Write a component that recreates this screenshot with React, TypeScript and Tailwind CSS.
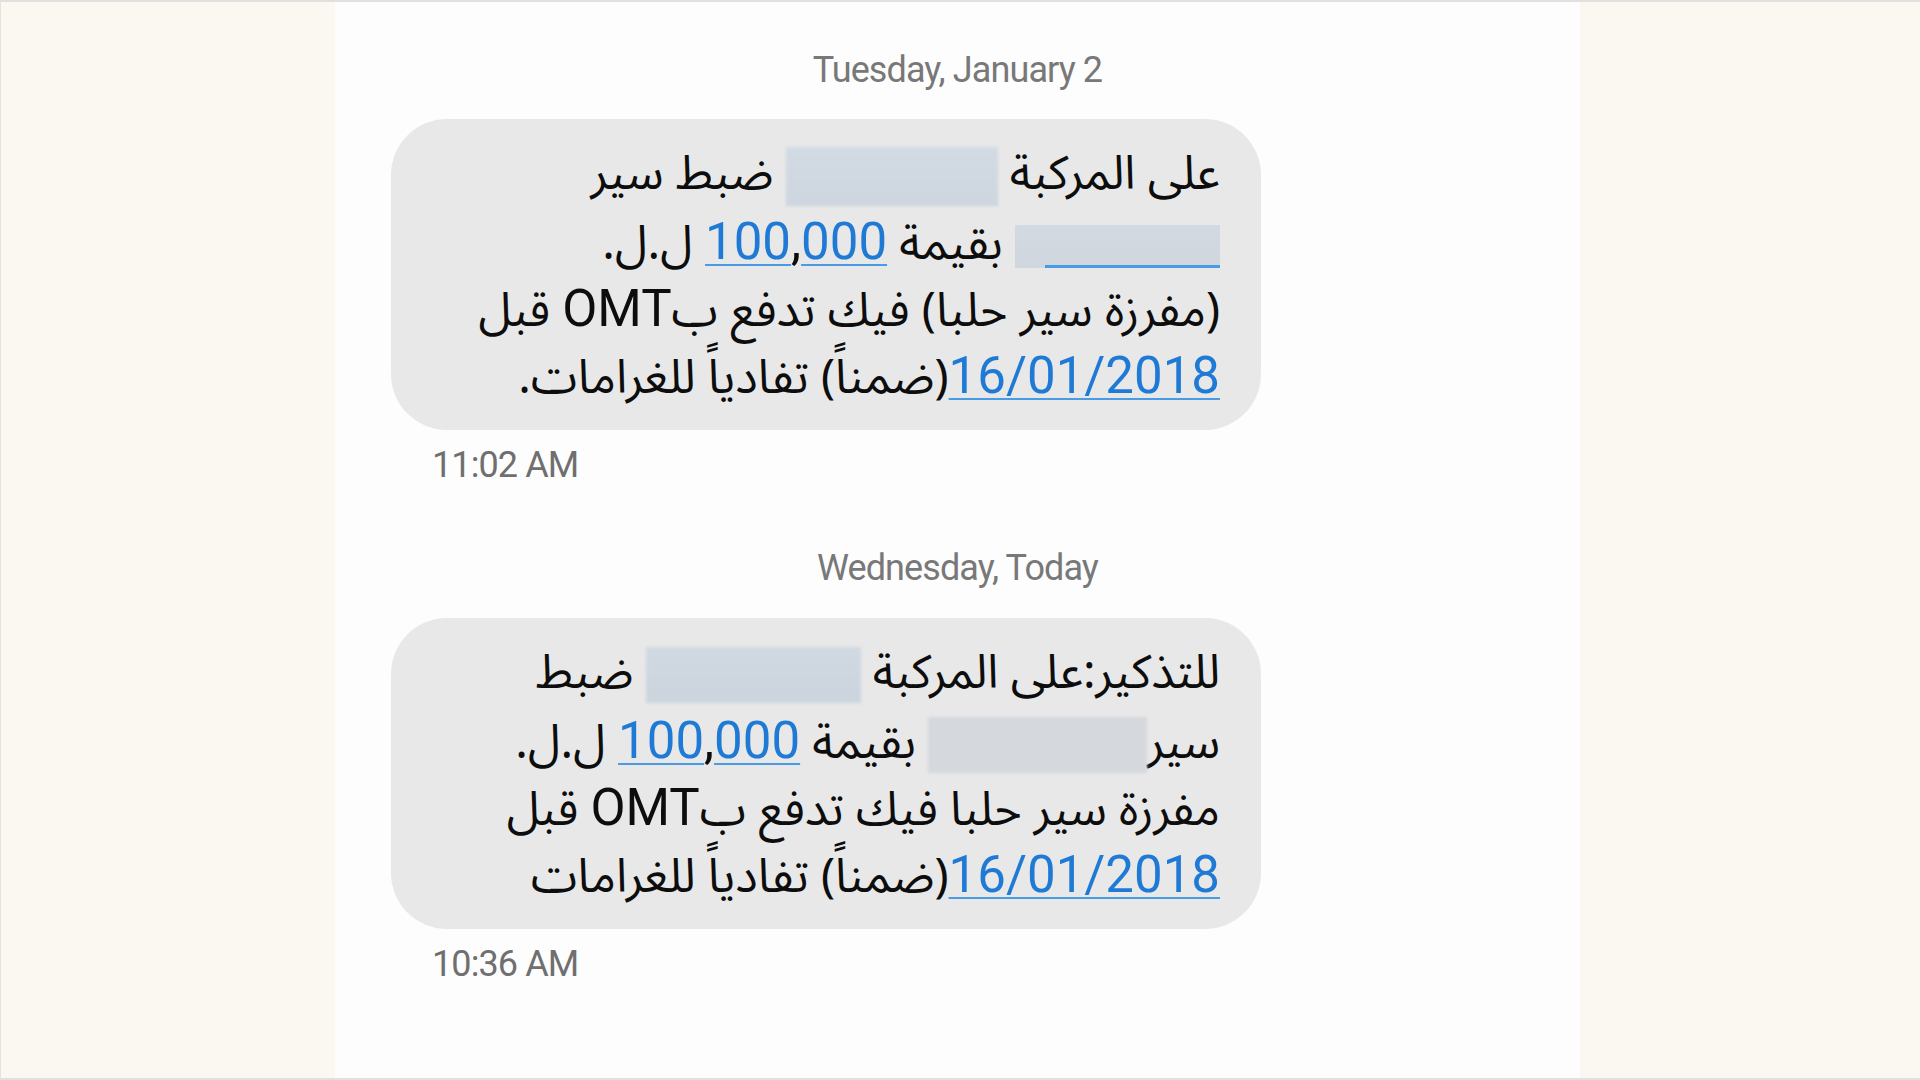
import React from 'react';

const latin = "font-['Roboto','Liberation_Sans',sans-serif]";
const arabic = "font-['Noto_Sans_Arabic','Noto_Naskh_Arabic','DejaVu_Sans',sans-serif]";

function Hidden({ className }: { className: string }) {
  return <span className={`inline-block align-middle blur-[1.5px] ${className}`} />;
}

function Link({ children }: { children: React.ReactNode }) {
  return (
    <span className={`${latin} text-[51px] text-[#1f7ad6] underline decoration-[#4a9be6] decoration-2 underline-offset-[5px]`}>
      {children}
    </span>
  );
}

function Amount() {
  return (
    <>
      <Link>100</Link>
      <span className={`${latin} text-[51px]`}>,</span>
      <Link>000</Link>
    </>
  );
}

function Omt() {
  return <span className={`${latin} text-[51px]`}>OMT</span>;
}

function Line({ children }: { children: React.ReactNode }) {
  return (
    <div dir="rtl" className="h-[67px] leading-[67px] whitespace-nowrap">
      {children}
    </div>
  );
}

function Bubble({ children }: { children: React.ReactNode }) {
  return (
    <div className={`w-[870px] h-[311px] rounded-[56px] bg-[#e8e8e8] pt-[22px] pr-[41px] text-[#0d0d0d] text-[47px] ${arabic}`}>
      {children}
    </div>
  );
}

function DateHeader({ children }: { children: React.ReactNode }) {
  return (
    <div className={`text-center text-[36px] leading-[38px] text-[#787878] tracking-tight ${latin}`}>
      {children}
    </div>
  );
}

function Time({ children }: { children: React.ReactNode }) {
  return (
    <div className={`pl-[41px] text-[36px] leading-[38px] text-[#6f6f6f] tracking-tight ${latin}`}>
      {children}
    </div>
  );
}

export default function App() {
  return (
    <div className="h-[1080px] w-[1920px] flex border-y-2 border-[#e2e0de] bg-[#fbf8f2] overflow-hidden">
      <div className="w-[335px] border-l border-[#e6e3df]" />
      <div className="w-[1245px] bg-[#fdfdfd] pt-[49px] pl-[56px]">
        <div className="w-[1133px]">
          <DateHeader>Tuesday, January 2</DateHeader>
        </div>
        <div className="mt-[30px]">
          <Bubble>
            <Line>
              على المركبة{' '}
              <Hidden className="w-[212px] h-[59px] bg-gradient-to-b from-[#d2dae3] to-[#cdd5de]" />{' '}
              ضبط سير
            </Line>
            <Line>
              <span className="relative inline-block align-middle w-[205px] h-[43px] bg-gradient-to-b from-[#d3d9e0] to-[#cfd6dd]">
                <span className="absolute bottom-0 right-0 w-[175px] h-[3px] bg-[#4a9be6]" />
              </span>{' '}
              بقيمة <Amount />{'  '}ل.ل.
            </Line>
            <Line>
              (مفرزة سير حلبا) فيك تدفع ب<Omt /> قبل
            </Line>
            <Line>
              <Link>16/01/2018</Link>(ضمناً) تفادياً للغرامات.
            </Line>
          </Bubble>
        </div>
        <div className="mt-[16px]">
          <Time>11:02 AM</Time>
        </div>
        <div className="mt-[65px] w-[1133px]">
          <DateHeader>Wednesday, Today</DateHeader>
        </div>
        <div className="mt-[31px]">
          <Bubble>
            <Line>
              للتذكير:على المركبة{' '}
              <Hidden className="w-[215px] h-[56px] bg-gradient-to-b from-[#d0d9e2] to-[#cbd4dd]" />{' '}
              ضبط
            </Line>
            <Line>
              سير<Hidden className="w-[219px] h-[56px] bg-[#d5d8dc]" /> بقيمة <Amount /> ل.ل.
            </Line>
            <Line>
              مفرزة سير حلبا فيك تدفع ب<Omt /> قبل
            </Line>
            <Line>
              <Link>16/01/2018</Link>(ضمناً) تفادياً للغرامات
            </Line>
          </Bubble>
        </div>
        <div className="mt-[16px]">
          <Time>10:36 AM</Time>
        </div>
      </div>
      <div className="flex-1" />
    </div>
  );
}
